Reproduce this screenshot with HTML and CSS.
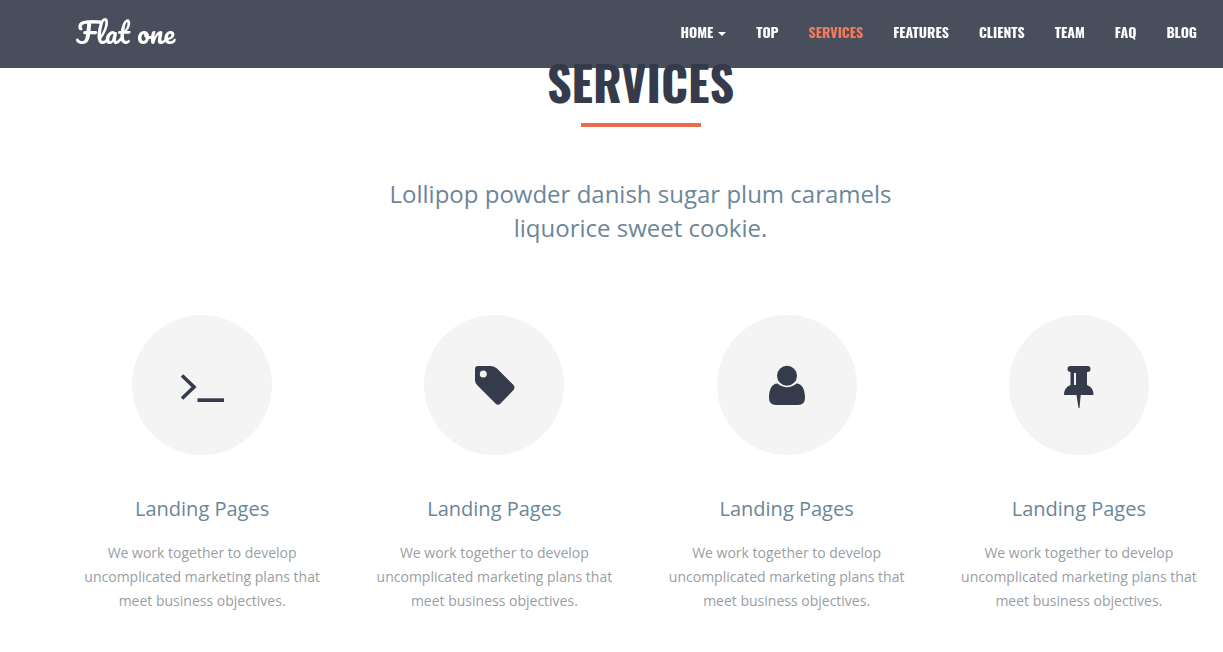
FILE: index.html
```html
<!DOCTYPE html>
<html lang="en">
<head>
<meta charset="utf-8">
<meta name="viewport" content="width=device-width, initial-scale=1">
<title>Flat one</title>
<link rel="stylesheet" href="styles.css">
</head>
<body>
<header class="navbar">
  <a class="brand" href="#top">Flat one</a>
  <nav class="menu">
    <a href="#home">HOME <span class="caret"></span></a>
    <a href="#top">TOP</a>
    <a class="active" href="#services">SERVICES</a>
    <a href="#features">FEATURES</a>
    <a href="#clients">CLIENTS</a>
    <a href="#team">TEAM</a>
    <a href="#faq">FAQ</a>
    <a href="#blog">BLOG</a>
  </nav>
</header>
<main class="services" id="services">
  <h1 class="title">SERVICES</h1>
  <p class="lead">Lollipop powder danish sugar plum caramels liquorice sweet cookie.</p>
  <div class="cards">
    <article class="card">
      <div class="disc"><svg class="icon" viewBox="0 0 60 60" aria-hidden="true"><path d="M10 20.500 22 32 10 43.500" fill="none" stroke="currentColor" stroke-width="3.600"/><path d="M25.500 43.300H52v3.700H25.500z"/></svg></div>
      <h2>Landing Pages</h2>
      <p>We work together to develop uncomplicated marketing plans that meet business objectives.</p>
    </article>
    <article class="card">
      <div class="disc"><svg class="icon" viewBox="0 0 60 60" aria-hidden="true"><path fill-rule="evenodd" d="M14 11H27Q30 11 33 13.500L49.500 30Q51.500 32.500 49.500 35L36.500 48.500Q34 51 31.500 48.500L13.500 30.500Q11 28 11 25.500V14Q11 11 14 11ZM19.300 15.500a3.500 3.500 0 1 0 0 7 3.500 3.500 0 0 0 0-7Z"/></svg></div>
      <h2>Landing Pages</h2>
      <p>We work together to develop uncomplicated marketing plans that meet business objectives.</p>
    </article>
    <article class="card">
      <div class="disc"><svg class="icon" viewBox="0 0 60 60" aria-hidden="true"><circle cx="30" cy="20.800" r="10"/><path d="M20.500 28.500Q30 36 39.500 28.500C45.500 28.500 48 35 48 43Q48 50 41 50H19Q12 50 12 43C12 35 14.500 28.500 20.500 28.500Z"/></svg></div>
      <h2>Landing Pages</h2>
      <p>We work together to develop uncomplicated marketing plans that meet business objectives.</p>
    </article>
    <article class="card">
      <div class="disc"><svg class="icon" viewBox="0 0 60 60" aria-hidden="true"><path fill-rule="evenodd" d="M21.500 11H38.500a3 3 0 0 1 0 6H38V30Q44.500 32.500 44.500 40H31.700L30.500 53H29.500L27.500 40H15Q15 32.500 21.500 30V17H21.500a3 3 0 0 1 0-6ZM25 18V30H27V18Z"/></svg></div>
      <h2>Landing Pages</h2>
      <p>We work together to develop uncomplicated marketing plans that meet business objectives.</p>
    </article>
  </div>
</main>
</body>
</html>
```

FILE: styles.css
```css
* { box-sizing: border-box; }
body {
  margin: 0;
  overflow-x: hidden;
  background: #fff;
  color: #999ea3;
  font: 14px/24px "Open Sans", sans-serif;
}
.navbar {
  position: fixed;
  z-index: 2;
  top: 0;
  left: 0;
  right: 0;
  height: 68px;
  padding: 0 26px 4px 76px;
  display: flex;
  align-items: center;
  justify-content: space-between;
  background: rgba(53, 59, 74, 0.9);
}
.brand {
  padding-top: 2px;
  color: #fff;
  font: 400 28px/40px Pacifico, "Liberation Serif", cursive;
  text-decoration: none;
}
.menu { display: flex; gap: 30px; }
.menu a {
  display: flex;
  align-items: center;
  gap: 5px;
  color: #fff;
  font: 700 14px/24px Oswald, "Roboto Condensed", "Open Sans", sans-serif;
  text-decoration: none;
}
.menu .active { color: #f07b5d; }
.caret {
  margin-top: 4px;
  border: 4px solid transparent;
  border-top-color: #fff;
  border-bottom: 0;
}
.services {
  margin: 0 -2px 0 56px;
  padding-top: 48px;
  text-align: center;
}
.title {
  margin: 0;
  color: #353b4a;
  font: 700 48px/68px Oswald, "Roboto Condensed", "Open Sans", sans-serif;
}
.title::after {
  content: "";
  display: block;
  width: 120px;
  height: 4px;
  margin: 7px auto 0;
  background: #ec6b4d;
}
.lead {
  max-width: 580px;
  margin: 50px auto 70px;
  color: #6c8699;
  font-size: 24px;
  line-height: 34px;
}
.cards {
  display: grid;
  grid-template-columns: repeat(4, 1fr);
}
.card { padding: 0 15px; }
.disc {
  display: grid;
  place-items: center;
  width: 140px;
  height: 140px;
  margin: 0 auto;
  border-radius: 50%;
  background: #f4f4f4;
  color: #353b4a;
}
.icon { width: 60px; height: 60px; fill: currentColor; }
.card h2 {
  margin: 40px 0 18px;
  color: #6c8699;
  font-size: 20px;
  font-weight: 400;
  line-height: 28px;
}
.card p { margin: 0; }
```
